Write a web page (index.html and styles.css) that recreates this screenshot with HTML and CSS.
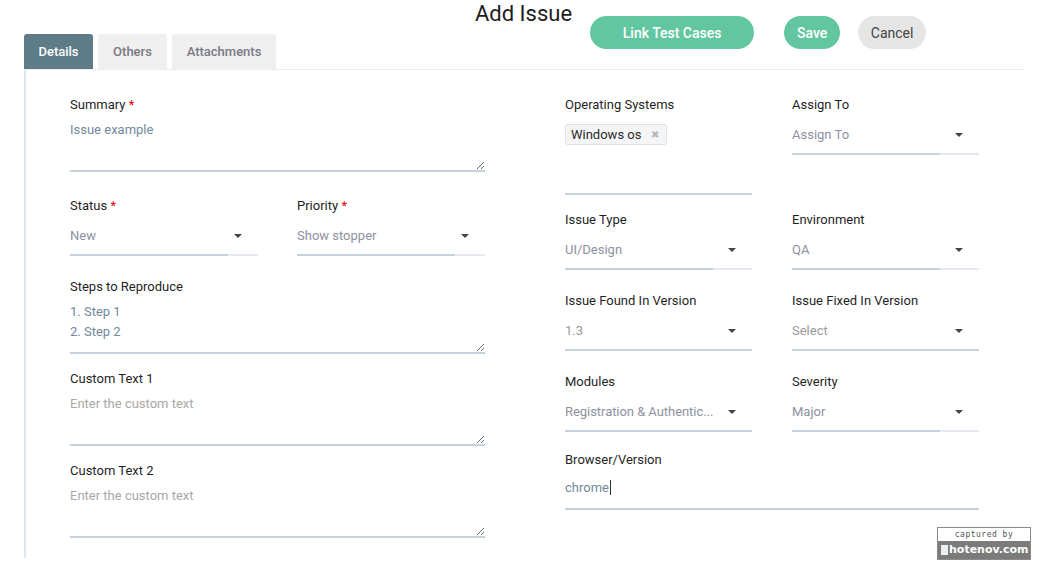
FILE: index.html
```html
<!DOCTYPE html>
<html>
<head>
<meta charset="utf-8">
<link rel="stylesheet" href="styles.css">
</head>
<body>
<div class="header">
  <div class="tabs">
    <div class="tab active tab-details">Details</div>
    <div class="tab tab-others">Others</div>
    <div class="tab tab-attach">Attachments</div>
  </div>
  <h1 class="title">Add Issue</h1>
  <button class="btn btn-green btn-link">Link Test Cases</button>
  <button class="btn btn-green btn-save">Save</button>
  <button class="btn btn-gray btn-cancel">Cancel</button>
</div>

<div class="content">
  <div class="col-left">
    <div class="field">
      <label class="lbl">Summary <span class="req">*</span></label>
      <textarea class="ta ta-value">Issue example</textarea>
    </div>
    <div class="pair mt-26">
      <div class="field">
        <label class="lbl">Status <span class="req">*</span></label>
        <div class="sel sel-left"><span class="sel-val">New</span><span class="sel-arrow"><span class="caret"></span></span></div>
      </div>
      <div class="field">
        <label class="lbl">Priority <span class="req">*</span></label>
        <div class="sel sel-left"><span class="sel-val">Show stopper</span><span class="sel-arrow"><span class="caret"></span></span></div>
      </div>
    </div>
    <div class="field mt-23">
      <label class="lbl">Steps to Reproduce</label>
      <textarea class="ta ta-value">1. Step 1
2. Step 2</textarea>
    </div>
    <div class="field mt-17">
      <label class="lbl">Custom Text 1</label>
      <textarea class="ta" placeholder="Enter the custom text"></textarea>
    </div>
    <div class="field mt-17">
      <label class="lbl">Custom Text 2</label>
      <textarea class="ta" placeholder="Enter the custom text"></textarea>
    </div>
  </div>

  <div class="col-right">
    <div class="pair-r">
      <div class="field">
        <label class="lbl">Operating Systems</label>
        <div class="multi"><span class="chip">Windows os <span class="chip-x">✖</span></span></div>
      </div>
      <div class="field">
        <label class="lbl">Assign To</label>
        <div class="sel"><span class="sel-val">Assign To</span><span class="sel-arrow"><span class="caret"></span></span></div>
      </div>
    </div>
    <div class="pair-r mt-17">
      <div class="field">
        <label class="lbl">Issue Type</label>
        <div class="sel"><span class="sel-val">UI/Design</span><span class="sel-arrow"><span class="caret"></span></span></div>
      </div>
      <div class="field">
        <label class="lbl">Environment</label>
        <div class="sel"><span class="sel-val">QA</span><span class="sel-arrow"><span class="caret"></span></span></div>
      </div>
    </div>
    <div class="pair-r mt-23">
      <div class="field">
        <label class="lbl">Issue Found In Version</label>
        <div class="sel sel-flat"><span class="sel-val light">1.3</span><span class="sel-arrow"><span class="caret"></span></span></div>
      </div>
      <div class="field">
        <label class="lbl">Issue Fixed In Version</label>
        <div class="sel sel-flat"><span class="sel-val light">Select</span><span class="sel-arrow"><span class="caret"></span></span></div>
      </div>
    </div>
    <div class="pair-r mt-23">
      <div class="field">
        <label class="lbl">Modules</label>
        <div class="sel sel-flat"><span class="sel-val ellip">Registration &amp; Authentic...</span><span class="sel-arrow"><span class="caret"></span></span></div>
      </div>
      <div class="field">
        <label class="lbl">Severity</label>
        <div class="sel"><span class="sel-val">Major</span><span class="sel-arrow"><span class="caret"></span></span></div>
      </div>
    </div>
    <div class="field mt-20">
      <label class="lbl">Browser/Version</label>
      <div class="inp">chrome<span class="cursor"></span></div>
    </div>
  </div>
</div>

<div class="watermark">
  <div class="wm-top">captured by</div>
  <div class="wm-bot"><span class="wm-p"></span>hotenov.com</div>
</div>
</body>
</html>
```

FILE: styles.css
```css
* { box-sizing: border-box; }
html, body { margin: 0; padding: 0; background: #fff; }
body {
  font-family: Roboto, "Liberation Sans", Arial, sans-serif;
  color: #222;
  width: 1039px;
  height: 568px;
  overflow: hidden;
  position: relative;
}

/* header */
.header {
  display: flex;
  align-items: flex-start;
  margin-left: 24px;
  width: 1000px;
  height: 70px;
  border-bottom: 1px solid #ececec;
}
.tabs {
  display: flex;
  gap: 5px;
  margin-top: 34px;
}
.tab {
  height: 35px;
  line-height: 35px;
  text-align: center;
  font-size: 13px;
  font-weight: 500;
  color: #7a7a86;
  background: #efefef;
  border-radius: 3px 3px 0 0;
}
.tab-details { width: 69px; }
.tab-others { width: 69px; }
.tab-attach { width: 104px; }
.tab.active { background: #5e7b88; color: #fff; }

.title {
  margin: 0 0 0 199px;
  font-size: 22px;
  font-weight: 400;
  line-height: 28px;
  color: #1d1d1d;
  white-space: nowrap;
}
.btn {
  margin-top: 16px;
  height: 33px;
  border: none;
  border-radius: 17px;
  font-family: Roboto, "Liberation Sans", Arial, sans-serif;
  font-size: 14px;
  padding: 0;
  cursor: pointer;
}
.btn-green { background: #62c6a0; color: #fff; font-weight: 500; }
.btn-gray { background: #e5e5e5; color: #444; font-weight: 400; }
.btn-link { width: 164px; margin-left: 18px; }
.btn-save { width: 56px; margin-left: 30px; }
.btn-cancel { width: 68px; margin-left: 18px; }

/* content */
.content {
  display: flex;
  margin-left: 24px;
  border-left: 2px solid #dce5ee;
  padding: 27px 0 20px 44px;
  height: 488px;
}
.col-left { width: 415px; display: flex; flex-direction: column; }
.col-right { width: 414px; margin-left: 80px; display: flex; flex-direction: column; }

.field { display: flex; flex-direction: column; }
.lbl {
  display: block;
  font-size: 13px;
  line-height: 16px;
  font-weight: 400;
  color: #1f1f1f;
}
.req { color: #e00; }

.mt-17 { margin-top: 17px; }
.mt-20 { margin-top: 20px; }
.mt-23 { margin-top: 23px; }
.mt-26 { margin-top: 26px; }

.ta {
  margin-top: 7px;
  height: 52px;
  width: 415px;
  border: none;
  border-bottom: 2px solid #c6d2de;
  padding: 0;
  font-family: Roboto, "Liberation Sans", Arial, sans-serif;
  font-size: 13px;
  line-height: 20px;
  color: #aaa;
  outline: none;
  resize: vertical;
  background: transparent;
}
.ta-value { color: #71899c; }
.ta::placeholder { color: #a8a8a8; }

.pair { display: flex; gap: 39px; }
.pair .field { width: 188px; }
.pair-r { display: flex; gap: 40px; }
.pair-r .field { width: 187px; }

.sel {
  display: flex;
  height: 42px;
}
.sel-val {
  flex: 1;
  min-width: 0;
  display: flex;
  align-items: center;
  padding-top: 3px;
  font-size: 13px;
  color: #8d91a0;
  border-bottom: 2px solid #c6d2de;
  white-space: nowrap;
  overflow: hidden;
}
.sel-val.light { color: #9a9a9a; }
.sel-val.ellip { overflow: visible; letter-spacing: -0.05px; }
.sel-arrow {
  width: 39px;
  flex-shrink: 0;
  display: flex;
  align-items: center;
  justify-content: flex-end;
  padding-top: 3px;
  padding-right: 16px;
  border-bottom: 2px solid #e3e9ef;
}
.sel-left .sel-arrow { width: 30px; }
.sel-flat .sel-arrow { border-bottom-color: #c6d2de; }
.caret {
  width: 0; height: 0;
  border-left: 4.5px solid transparent;
  border-right: 4.5px solid transparent;
  border-top: 4.5px solid #444;
}

.multi {
  height: 82px;
  border-bottom: 2px solid #c6d2de;
  padding-top: 11px;
}
.chip {
  display: inline-flex;
  align-items: center;
  white-space: nowrap;
  height: 21px;
  padding: 0 7px 0 5px;
  background: #f4f5f6;
  border: 1px solid #dde2e7;
  border-radius: 3px;
  font-size: 13px;
  color: #2b2b2b;
}
.chip-x { color: #b8b8b8; font-size: 10px; margin-left: 10px; }

.inp {
  width: 414px;
  height: 42px;
  display: flex;
  align-items: center;
  padding-bottom: 2px;
  border-bottom: 2px solid #c6d2de;
  font-size: 13px;
  color: #71899c;
}
.cursor { display: inline-block; width: 1px; height: 15px; background: #333; margin-left: 1px; }

/* watermark overlay */
.watermark {
  position: absolute;
  left: 937px;
  top: 527px;
  width: 94px;
  height: 33px;
  border: 1px solid #8a8a8a;
  font-family: "DejaVu Sans Mono", "Liberation Mono", monospace;
}
.wm-top {
  height: 13px;
  background: #fff;
  font-size: 8px;
  line-height: 13px;
  text-align: center;
  color: #555;
  letter-spacing: 0.5px;
}
.wm-bot {
  height: 18px;
  background: #7b7b7b;
  color: #fff;
  font-size: 11px;
  font-weight: bold;
  line-height: 18px;
  display: flex;
  align-items: center;
  padding-left: 3px;
  font-family: "DejaVu Sans", sans-serif;
}
.wm-p { display: inline-block; width: 7px; height: 10px; background: #eee; margin-right: 1px; }
```
